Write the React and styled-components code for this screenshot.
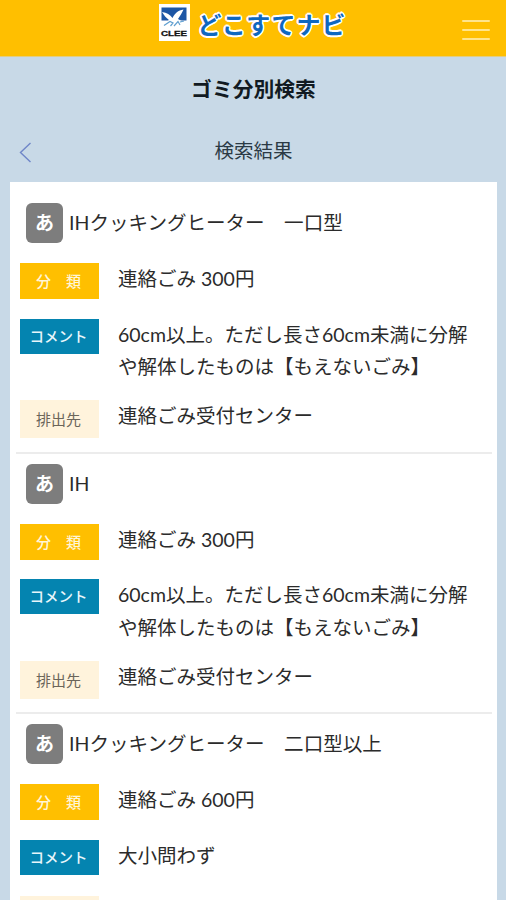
import React from 'react';
import styled, { createGlobalStyle } from 'styled-components';

const GlobalStyle = createGlobalStyle`
  * {
    box-sizing: border-box;
  }

  body {
    margin: 0;
    background-color: #c8d9e7;
    color: #2b2b2b;
    font-family: Lato, 'Noto Sans CJK JP', sans-serif;
    font-size: 19.5px;
    font-weight: 400;
  }
`;

const Page = styled.div`
  display: flex;
  flex-direction: column;
  height: 900px;
  overflow: hidden;
  background-color: #c8d9e7;
`;

const Header = styled.header`
  display: grid;
  grid-template-columns: 1fr auto 1fr;
  flex: none;
  height: 57px;
  padding: 0 16px;
  background-color: #ffbf00;
  border-bottom: 1px solid #e3cd80;
`;

const Brand = styled.div`
  grid-column: 2;
  display: flex;
  align-items: flex-start;
  gap: 7px;
  padding-top: 4px;
`;

const BrandName = styled.div`
  margin-top: 6px;
  color: #0f68c0;
  font-family: 'Noto Sans CJK JP', sans-serif;
  font-size: 24px;
  font-weight: 700;
  letter-spacing: 1px;
  line-height: 28px;
  white-space: nowrap;
  text-shadow:
    1.8px 0 0 #fff, -1.8px 0 0 #fff, 0 1.8px 0 #fff, 0 -1.8px 0 #fff,
    1.3px 1.3px 0 #fff, -1.3px 1.3px 0 #fff,
    1.3px -1.3px 0 #fff, -1.3px -1.3px 0 #fff;
`;

const MenuButton = styled.button`
  display: flex;
  flex-direction: column;
  justify-self: end;
  gap: 7px;
  width: 28px;
  margin-top: 20px;
  padding: 0;
  border: none;
  background: none;
`;

const MenuBar = styled.span`
  height: 2px;
  border-radius: 1px;
  background-color: #ffe48c;
`;

const PageTitle = styled.h1`
  flex: none;
  margin: 16px 0 0;
  padding-left: 1px;
  font-size: 20.8px;
  font-weight: 700;
  line-height: 32px;
  text-align: center;
  color: #111a22;
`;

const SubHeader = styled.div`
  display: grid;
  grid-template-columns: 40px 1fr 40px;
  align-items: center;
  flex: none;
  height: 40px;
  margin: 26px 0 11px;
`;

const BackButton = styled.button`
  display: flex;
  justify-content: flex-end;
  padding: 2px 8px 0 0;
  border: none;
  background: none;
`;

const SubTitle = styled.h2`
  margin: 0;
  padding-left: 1px;
  font-size: 19.5px;
  font-weight: 400;
  line-height: 32px;
  text-align: center;
  color: #2b3a45;
`;

const Card = styled.main`
  flex: 1;
  min-height: 0;
  margin: 0 9px 0 10px;
  padding: 11px 5px 0 6px;
  overflow: hidden;
  background-color: #fff;
`;

const Item = styled.section`
  height: ${(props) => (props.$last ? 'auto' : '260.5px')};
  padding: 10px 0 0 4px;
  border-bottom: 2px solid #ececec;
`;

const ItemHead = styled.div`
  display: flex;
  align-items: center;
  gap: 6px;
  height: 40px;
  margin: 0 0 20px 6px;
`;

const KanaBadge = styled.span`
  width: 37px;
  height: 40px;
  border-radius: 6px;
  background-color: #7d7d7d;
  color: #fff;
  font-size: 19px;
  font-weight: 700;
  line-height: 39px;
  text-align: center;
`;

const ItemName = styled.h3`
  margin: 0;
  font-size: 19.55px;
  font-weight: 400;
  line-height: 32px;
  white-space: pre;
`;

const Rows = styled.div`
  display: flex;
  flex-direction: column;
  gap: 16.5px;
`;

const Row = styled.div`
  display: flex;
  align-items: flex-start;
  gap: 19px;
  min-height: 39.3px;
`;

const chipTypes = {
  kind: { bg: '#ffbf00', text: '#fff6d8', height: '36px', size: '15px' },
  comment: { bg: '#0484b0', text: '#e8f6fb', height: '35px', size: '14.5px' },
  place: { bg: '#fff3dc', text: '#6b655a', height: '38px', size: '15px' },
};

const Chip = styled.span`
  flex: none;
  width: 79px;
  height: ${(props) => chipTypes[props.$type].height};
  padding-right: 2px;
  background-color: ${(props) => chipTypes[props.$type].bg};
  color: ${(props) => chipTypes[props.$type].text};
  font-size: ${(props) => chipTypes[props.$type].size};
  font-weight: ${(props) => (props.$type === 'place' ? 400 : 500)};
  line-height: ${(props) => chipTypes[props.$type].height};
  text-align: center;
  white-space: pre;
`;

const Value = styled.div`
  line-height: 32.6px;
  white-space: pre;
`;

const items = [
  {
    name: 'IHクッキングヒーター　一口型',
    kind: '連絡ごみ 300円',
    comment: '60cm以上。ただし長さ60cm未満に分解\nや解体したものは【もえないごみ】',
    place: '連絡ごみ受付センター',
  },
  {
    name: 'IH',
    kind: '連絡ごみ 300円',
    comment: '60cm以上。ただし長さ60cm未満に分解\nや解体したものは【もえないごみ】',
    place: '連絡ごみ受付センター',
  },
  {
    name: 'IHクッキングヒーター　二口型以上',
    kind: '連絡ごみ 600円',
    comment: '大小問わず',
    place: '',
  },
];

function CleeLogo() {
  return (
    <svg width="31" height="37" viewBox="0 0 31 37">
      <rect width="31" height="37" fill="#fff" />
      <rect x="2.5" y="3.5" width="25" height="13" fill="#1d56a5" />
      <path d="M3 8 C8 8.500 11 11 13.500 14 C16 9 19 6.500 24.500 5.500 C23 9 21 12 19 15 L26 19 L27.500 22 L3 22 L10 16 C7 14 5 11 3 8Z" fill="#fff" />
      <path d="M5 21.500 L11 17.500 L14 19 L11.500 22 M15 22 L19 17.500 L21 21 M21 18 L25 17" fill="none" stroke="#5f9fd0" strokeWidth="1.200" />
      <text x="2" y="31.800" fontFamily="Liberation Sans, sans-serif" fontSize="7.500" fontWeight="700" fill="#111" stroke="#111" strokeWidth="0.300" textLength="26" lengthAdjust="spacingAndGlyphs">CLEE</text>
    </svg>
  );
}

function ResultItem({ item, last }) {
  return (
    <Item $last={last}>
      <ItemHead>
        <KanaBadge>あ</KanaBadge>
        <ItemName>{item.name}</ItemName>
      </ItemHead>
      <Rows>
        <Row>
          <Chip $type="kind">分　類</Chip>
          <Value>{item.kind}</Value>
        </Row>
        <Row>
          <Chip $type="comment">コメント</Chip>
          <Value>{item.comment}</Value>
        </Row>
        <Row>
          <Chip $type="place">{item.place && '排出先'}</Chip>
          <Value>{item.place}</Value>
        </Row>
      </Rows>
    </Item>
  );
}

function App() {
  return (
    <>
      <GlobalStyle />
      <Page>
        <Header>
          <Brand>
            <CleeLogo />
            <BrandName>どこすてナビ</BrandName>
          </Brand>
          <MenuButton>
            <MenuBar />
            <MenuBar />
            <MenuBar />
          </MenuButton>
        </Header>
        <PageTitle>ゴミ分別検索</PageTitle>
        <SubHeader>
          <BackButton>
            <svg width="13" height="21" viewBox="0 0 13 21">
              <path d="M11.500 1 L1.500 10.500 L11.500 20" fill="none" stroke="#6f86c8" strokeWidth="1.400" />
            </svg>
          </BackButton>
          <SubTitle>検索結果</SubTitle>
        </SubHeader>
        <Card>
          {items.map((item, index) => (
            <ResultItem key={item.name} item={item} last={index === items.length - 1} />
          ))}
        </Card>
      </Page>
    </>
  );
}

export default App;
